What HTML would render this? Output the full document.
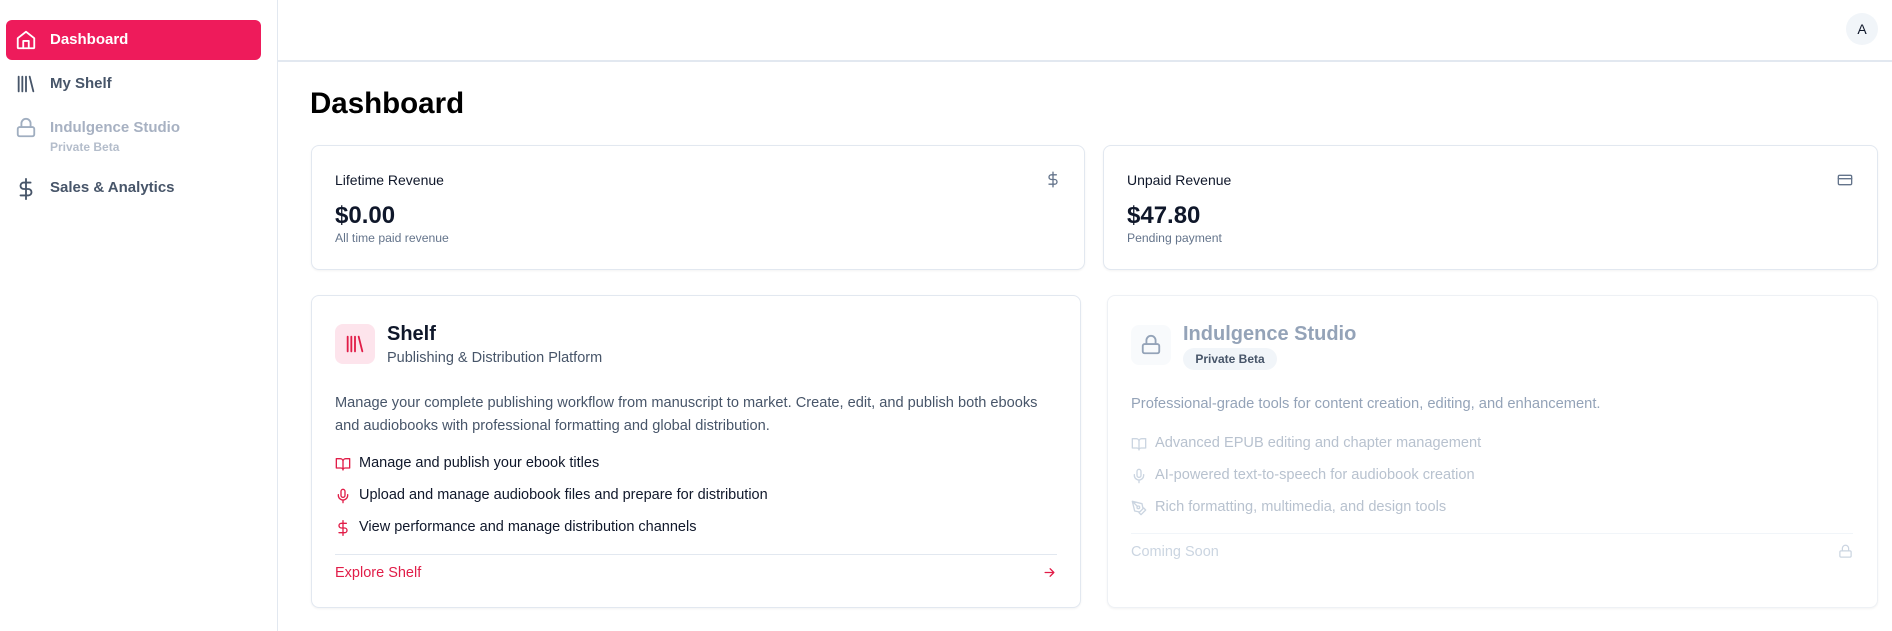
<!DOCTYPE html>
<html><head><meta charset="utf-8"><style>
*{box-sizing:border-box;margin:0;padding:0}
body{width:1892px;height:631px;overflow:hidden;background:#fff;font-family:"Liberation Sans",sans-serif;position:relative;color:#0f172a}
.a{position:absolute;white-space:nowrap}
.card{position:absolute;border:1px solid #e2e8f0;border-radius:8px;background:#fff;box-shadow:0 1px 2px rgba(0,0,0,.05)}
svg{position:absolute;fill:none;stroke-linecap:round;stroke-linejoin:round}
</style></head><body>
<div class="a" style="left:277px;top:0;width:1px;height:631px;background:#e2e8f0"></div>
<div class="a" style="left:278px;top:60px;width:1614px;height:2px;background:#e2e8f0"></div>
<div class="a" style="left:6px;top:20px;width:255px;height:40px;background:#ee1b5b;border-radius:6px"></div>
<svg style="left:15px;top:29px" width="22" height="22" viewBox="0 0 24 24" stroke="#fff" stroke-width="2"><path d="M3 10l9-7 9 7v10a1 1 0 0 1-1 1H4a1 1 0 0 1-1-1z"/><path d="M9 21v-8h6v8"/></svg>
<div class="a" style="left:50px;top:31px;font-size:15px;font-weight:bold;color:#fff">Dashboard</div>
<svg style="left:15px;top:73px" width="22" height="22" viewBox="0 0 24 24" stroke="#475569" stroke-width="2"><path d="M4 4v16M8 4v16M12 4v16M16 4l4 16"/></svg>
<div class="a" style="left:50px;top:75px;font-size:15px;font-weight:bold;color:#475569">My Shelf</div>
<svg style="left:15px;top:117px" width="22" height="22" viewBox="0 0 24 24" stroke="#a0aec0" stroke-width="2"><rect x="3" y="11" width="18" height="10" rx="2"/><path d="M7 11V7a5 5 0 0 1 10 0v4"/></svg>
<div class="a" style="left:50px;top:119px;font-size:15px;font-weight:bold;color:#a7b1c2">Indulgence Studio</div>
<div class="a" style="left:50px;top:140px;font-size:12px;font-weight:bold;color:#b4bdcb">Private Beta</div>
<svg style="left:15px;top:177px" width="22" height="24" viewBox="0 0 24 24" stroke="#475569" stroke-width="2"><path d="M12 1v22M17 5H9.5a3.5 3.5 0 0 0 0 7h5a3.5 3.5 0 0 1 0 7H6"/></svg>
<div class="a" style="left:50px;top:179px;font-size:15px;font-weight:bold;color:#475569">Sales &amp; Analytics</div>
<div class="a" style="left:1846px;top:13px;width:32px;height:32px;border-radius:50%;background:#f1f5f9;text-align:center;line-height:32px;font-size:14px;color:#0f172a">A</div>
<div class="a" style="left:310px;top:87px;font-size:29.5px;font-weight:bold;color:#000">Dashboard</div>
<div class="card" style="left:311px;top:145px;width:774px;height:125px"></div>
<div class="a" style="left:335px;top:172px;font-size:14px;color:#0f172a">Lifetime Revenue</div>
<svg style="left:1045px;top:171px" width="16" height="17" viewBox="0 0 24 24" stroke="#64748b" stroke-width="2"><path d="M12 1v22M17 5H9.5a3.5 3.5 0 0 0 0 7h5a3.5 3.5 0 0 1 0 7H6"/></svg>
<div class="a" style="left:335px;top:202px;font-size:24px;font-weight:bold;color:#0f172a">$0.00</div>
<div class="a" style="left:335px;top:231px;font-size:12.2px;color:#64748b">All time paid revenue</div>
<div class="card" style="left:1103px;top:145px;width:775px;height:125px"></div>
<div class="a" style="left:1127px;top:172px;font-size:14px;color:#0f172a">Unpaid Revenue</div>
<svg style="left:1837px;top:172px" width="16" height="16" viewBox="0 0 24 24" stroke="#64748b" stroke-width="2"><rect x="2" y="5" width="20" height="14" rx="2"/><path d="M2 10h20"/></svg>
<div class="a" style="left:1127px;top:202px;font-size:24px;font-weight:bold;color:#0f172a">$47.80</div>
<div class="a" style="left:1127px;top:231px;font-size:12.2px;color:#64748b">Pending payment</div>
<div class="card" style="left:311px;top:295px;width:770px;height:313px"></div>
<div class="a" style="left:335px;top:324px;width:40px;height:40px;border-radius:8px;background:#fde4ec"></div>
<svg style="left:344px;top:333px" width="22" height="22" viewBox="0 0 24 24" stroke="#e11d48" stroke-width="2"><path d="M4 4v16M8 4v16M12 4v16M16 4l4 16"/></svg>
<div class="a" style="left:387px;top:323px;font-size:20px;font-weight:bold;color:#0f172a">Shelf</div>
<div class="a" style="left:387px;top:350px;font-size:14.5px;color:#475569">Publishing &amp; Distribution Platform</div>
<div class="a" style="left:335px;top:392px;font-size:14.6px;line-height:23px;color:#475569">Manage your complete publishing workflow from manuscript to market. Create, edit, and publish both ebooks<br>and audiobooks with professional formatting and global distribution.</div>
<svg style="left:335px;top:456px" width="16" height="16" viewBox="0 0 24 24" stroke="#e11d48" stroke-width="2"><path d="M2 4h6a4 4 0 0 1 4 4v13a3 3 0 0 0-3-3H2zM22 4h-6a4 4 0 0 0-4 4v13a3 3 0 0 1 3-3h7z"/></svg>
<div class="a" style="left:359px;top:455px;font-size:14.5px;color:#0f172a">Manage and publish your ebook titles</div>
<svg style="left:335px;top:488px" width="16" height="16" viewBox="0 0 24 24" stroke="#e11d48" stroke-width="2"><rect x="9" y="2" width="6" height="12" rx="3"/><path d="M5 10v1a7 7 0 0 0 14 0v-1M12 18v4"/></svg>
<div class="a" style="left:359px;top:487px;font-size:14.5px;color:#0f172a">Upload and manage audiobook files and prepare for distribution</div>
<svg style="left:335px;top:520px" width="16" height="16" viewBox="0 0 24 24" stroke="#e11d48" stroke-width="2"><path d="M12 1v22M17 5H9.5a3.5 3.5 0 0 0 0 7h5a3.5 3.5 0 0 1 0 7H6"/></svg>
<div class="a" style="left:359px;top:519px;font-size:14.5px;color:#0f172a">View performance and manage distribution channels</div>
<div class="a" style="left:335px;top:554px;width:722px;height:1px;background:#e2e8f0"></div>
<div class="a" style="left:335px;top:565px;font-size:14.5px;color:#e11d48">Explore Shelf</div>
<svg style="left:1042px;top:565px" width="15" height="15" viewBox="0 0 24 24" stroke="#e11d48" stroke-width="2"><path d="M5 12h14M13 6l6 6-6 6"/></svg>
<div class="card" style="left:1107px;top:295px;width:771px;height:313px;border-color:#eef1f5"></div>
<div class="a" style="left:1131px;top:325px;width:40px;height:40px;border-radius:8px;background:#f8fafc"></div>
<svg style="left:1140px;top:334px" width="22" height="22" viewBox="0 0 24 24" stroke="#94a3b8" stroke-width="2"><rect x="3" y="11" width="18" height="10" rx="2"/><path d="M7 11V7a5 5 0 0 1 10 0v4"/></svg>
<div class="a" style="left:1183px;top:323px;font-size:20px;font-weight:bold;color:#94a3b8">Indulgence Studio</div>
<div class="a" style="left:1183px;top:348px;width:94px;height:22px;border-radius:11px;background:#f1f5f9;font-size:12px;font-weight:bold;color:#475569;text-align:center;line-height:22px">Private Beta</div>
<div class="a" style="left:1131px;top:396px;font-size:14.7px;color:#94a3b8">Professional-grade tools for content creation, editing, and enhancement.</div>
<svg style="left:1131px;top:436px" width="16" height="16" viewBox="0 0 24 24" stroke="#cbd5e1" stroke-width="2"><path d="M2 4h6a4 4 0 0 1 4 4v13a3 3 0 0 0-3-3H2zM22 4h-6a4 4 0 0 0-4 4v13a3 3 0 0 1 3-3h7z"/></svg>
<div class="a" style="left:1155px;top:435px;font-size:14.6px;color:#b8c2cf">Advanced EPUB editing and chapter management</div>
<svg style="left:1131px;top:468px" width="16" height="16" viewBox="0 0 24 24" stroke="#cbd5e1" stroke-width="2"><rect x="9" y="2" width="6" height="12" rx="3"/><path d="M5 10v1a7 7 0 0 0 14 0v-1M12 18v4"/></svg>
<div class="a" style="left:1155px;top:467px;font-size:14.6px;color:#b8c2cf">AI-powered text-to-speech for audiobook creation</div>
<svg style="left:1131px;top:500px" width="16" height="16" viewBox="0 0 24 24" stroke="#cbd5e1" stroke-width="2"><path d="M12 19l7-7 3 3-7 7zM18 13l-1.5-7.5L2 2l3.5 14.5L13 18zM2 2l7.6 7.6"/><circle cx="11" cy="11" r="2"/></svg>
<div class="a" style="left:1155px;top:499px;font-size:14.6px;color:#b8c2cf">Rich formatting, multimedia, and design tools</div>
<div class="a" style="left:1131px;top:533px;width:722px;height:1px;background:#f1f5f9"></div>
<div class="a" style="left:1131px;top:544px;font-size:14.5px;color:#cbd5e1">Coming Soon</div>
<svg style="left:1838px;top:544px" width="15" height="15" viewBox="0 0 24 24" stroke="#cbd5e1" stroke-width="2"><rect x="3" y="11" width="18" height="10" rx="2"/><path d="M7 11V7a5 5 0 0 1 10 0v4"/></svg>
</body></html>
